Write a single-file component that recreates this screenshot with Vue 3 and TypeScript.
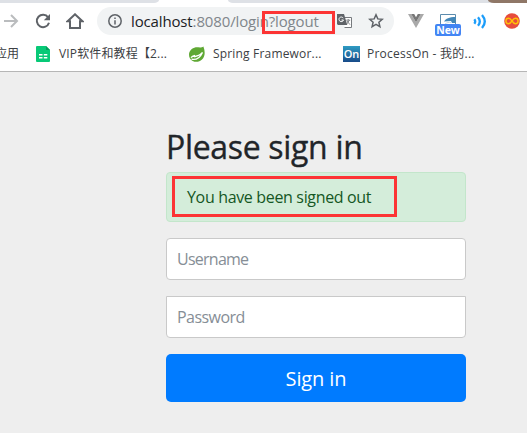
<script setup lang="ts">
import { ref } from 'vue'

const username = ref<string>('')
const password = ref<string>('')
</script>

<template>
  <div class="window">
    <div class="tabs">
      <div class="tab-left"></div>
      <div class="tab-right"><div class="avatar"></div></div>
    </div>
    <div class="toolbar">
      <svg class="nav forward" viewBox="0 0 16 16"><path d="M1 8h13M8 2l6 6-6 6" /></svg>
      <svg class="nav reload" viewBox="0 0 16 16"><path d="M13.1 4.3A6.2 6.2 0 1 0 14 9.7" /><path class="solid" d="M15 1v6.2H8.8z" /></svg>
      <svg class="nav home" viewBox="0 0 18 16"><path d="M1.6 8.2 9 1.3l7.4 6.9H14V15H4V8.2z" /></svg>
      <div class="omnibox">
        <svg class="info" viewBox="0 0 14 14"><circle cx="7" cy="7" r="6.2" /><path d="M7 6.2v4.3M7 3.4v1.6" /></svg>
        <div class="url"><span class="host">localhost</span><span class="path">:8080/login</span><span class="query">?logout</span></div>
        <svg class="translate" viewBox="0 0 15 14">
          <path d="M7 3.5h7.5v10H7.5" fill="#fff" stroke="#777a7e" />
          <path d="M0 0h7l3.3 11H1L0 10z" fill="#5f6368" />
          <path d="M6.3 4.2A2.3 2.3 0 1 0 6.5 6H4.5" fill="none" stroke="#fff" />
          <path d="M9.2 6.2h4M11.2 5v1.2M12.4 6.2 9.8 10M10 7l3 3.7" fill="none" stroke="#777a7e" stroke-width=".9" />
        </svg>
        <svg class="star" viewBox="0 0 16 16"><path d="m8 1.8 1.8 4.1 4.4.4-3.3 2.9 1 4.4L8 11.3l-3.9 2.3 1-4.4-3.3-2.9 4.4-.4z" /></svg>
      </div>
      <svg class="vue" viewBox="0 0 16 14"><path d="M0 0h3.2L8 8.3 12.8 0H16L8 14z" fill="#a9a9a9" /><path d="M3.2 0h3L8 3.2 9.8 0h3L8 8.3z" fill="#777" /></svg>
      <div class="clip">
        <svg viewBox="0 0 17 12"><path d="M.5 12V.5h15V12" fill="#fff" stroke="#5b8bad" /><path d="M4 7.500C6 4.500 9 3 15.500 3v6H12l-1-2z" fill="#4387b8" /><path d="M5 10c2-1.500 4-2 6-1.500" fill="none" stroke="#c6d9e5" /></svg>
        <span class="badge">New</span>
      </div>
      <svg class="waves" viewBox="0 0 14 15"><path d="M1.3 5.200q1.800 2.300 0 4.600M5 3.200q3.600 4.300 0 8.600M9 1q5.600 6.500 0 13" /></svg>
      <svg class="infinity" viewBox="0 0 16 16"><circle cx="8" cy="8" r="7.8" fill="#e74c3c" /><path d="M8 8C6.2 5.4 5.4 5.3 4.6 5.3a2.7 2.7 0 0 0 0 5.4C5.4 10.7 6.2 10.6 8 8s2.6-2.7 3.4-2.7a2.7 2.7 0 0 1 0 5.4C10.6 10.7 9.8 10.6 8 8z" fill="none" stroke="#ffc107" stroke-width="1.4" /></svg>
    </div>
    <div class="bookmarks">
      <span class="apps">应用</span>
      <svg class="sheet" viewBox="0 0 14 16"><path d="M1 0h9l4 4v11a1 1 0 0 1-1 1H1a1 1 0 0 1-1-1V1a1 1 0 0 1 1-1z" fill="#07c977" /><path d="M10 0v4h4z" fill="#069d5d" /><path d="M3 8.700h3.500M7.800 8.700h3.500M3 11.700h3.500M7.800 11.700h3.500" stroke="#fff" stroke-width="1.500" /></svg>
      <span class="mark vip">VIP软件和教程【2...</span>
      <svg class="leaf" viewBox="0 0 16 16"><path d="M14.400.5C16.500 6 16 11 13 13.500 9.500 17 3.500 16.500 1 12.500-1.500 8 1 2.500 6 1.500c3-.6 6 1 8.400-1z" fill="#5fa834" /><path d="M2.500 13.200c5 .8 9-2.200 11-6.800-2.300 3-5 3.600-8.300 4.400M2 11.700c1-1.300 2-1.700 4-2.200" fill="none" stroke="#fff" stroke-width="1.300" /></svg>
      <span class="mark spring">Spring Framewor...</span>
      <span class="on">On</span>
      <span class="mark process">ProcessOn - 我的...</span>
    </div>
    <main class="page">
      <form class="signin" @submit.prevent>
        <h2>Please sign in</h2>
        <div class="alert"><span>You have been signed out</span></div>
        <input v-model="username" class="user" type="text" placeholder="Username" />
        <input v-model="password" class="pass" type="password" placeholder="Password" />
        <button type="submit">Sign in</button>
      </form>
    </main>
    <div class="marker marker-url"></div>
    <div class="marker marker-alert"></div>
  </div>
</template>

<style>
body { margin: 0; background: #eee; }
</style>
<style scoped>
* { box-sizing: border-box; }
.window { position: relative; width: 527px; height: 433px; overflow: hidden; display: flex; flex-direction: column; background: #fff; font-family: "Open Sans", "Noto Sans CJK SC", sans-serif; }
svg { display: block; flex: none; }
.tabs { height: 3px; display: flex; justify-content: space-between; flex: none; }
.tab-left { width: 159px; background: #dee1e6; border-bottom-right-radius: 5px 3px; }
.tab-right { width: 299px; display: flex; justify-content: flex-end; background: #dee1e6; border-bottom-left-radius: 5px 3px; }
.avatar { width: 39px; background: #8f7767; border-bottom-left-radius: 6px 3px; }
.toolbar { height: 36px; flex: none; display: flex; align-items: center; }
.nav { fill: none; stroke: #5f6368; stroke-width: 2; height: 16px; }
.solid { fill: #5f6368; stroke: none; }
.forward { width: 16px; margin-left: 3px; stroke: #babcbe; }
.reload { width: 16px; margin-left: 16px; }
.home { width: 18px; margin-left: 15px; }
.omnibox { width: 297px; height: 28px; margin-left: 13px; margin-right: 14px; padding-left: 11px; border-radius: 14px; background: #f1f3f4; display: flex; align-items: center; flex: none; }
.info { width: 14px; height: 14px; fill: none; stroke: #5f6368; stroke-width: 1.5; }
.url { width: 206px; margin-left: 9px; padding-bottom: 1px; font-size: 15px; letter-spacing: -.14px; line-height: 20px; white-space: nowrap; color: #80868b; }
.host { color: #202124; }
.translate { width: 15px; height: 14px; }
.star { width: 16px; height: 16px; margin-left: 16px; fill: none; stroke: #5f6368; stroke-width: 1.5; }
.vue { width: 16px; height: 14px; }
.clip { width: 26px; height: 22px; margin-left: 11px; margin-top: 7px; display: flex; flex-direction: column; align-items: center; }
.clip svg { width: 17px; height: 12px; margin-bottom: -2px; }
.badge { width: 26px; height: 12px; flex: none; border-radius: 2px; background: #4285f4; color: #fff; text-align: center; font-size: 10.5px; line-height: 12px; font-weight: 700; letter-spacing: -.1px; z-index: 1; }
.waves { width: 14px; height: 15px; margin-left: 12px; fill: none; stroke: #1c9dfa; stroke-width: 2.3; }
.infinity { width: 16px; height: 16px; margin-left: 17px; }
.bookmarks { height: 33px; flex: none; display: flex; align-items: center; padding-bottom: 3px; border-bottom: 1px solid #b6b6b6; color: #3c4043; font-size: 12px; line-height: 18px; white-space: nowrap; }
.apps { width: 24px; margin-left: -5px; }
.sheet { width: 14px; height: 16px; margin-left: 17px; }
.mark { flex: none; padding-top: 1px; }
.vip { width: 130px; margin-left: 9px; letter-spacing: .15px; }
.leaf { width: 16px; height: 16px; }
.spring { width: 129px; margin-left: 8px; letter-spacing: .18px; }
.on { width: 17px; height: 16px; margin-left: 1px; background: linear-gradient(#2e9bc2, #184b89); color: #fff; font-size: 11px; line-height: 16px; text-align: center; font-weight: 600; }
.process { margin-left: 7px; letter-spacing: .25px; }
.page { flex: 1; background: #eee; padding: 56px 61px 0 166px; }
.signin { width: 300px; display: flex; flex-direction: column; }
h2 { margin: 0 0 6px; font-size: 32px; letter-spacing: -.32px; line-height: 38px; font-weight: 500; -webkit-text-stroke: .35px #212529; color: #212529; white-space: nowrap; }
.alert { height: 50px; margin-bottom: 16px; padding: 12px 20px; border: 1px solid #c3e6cb; border-radius: 4px; background: #d4edda; color: #155724; font-size: 16px; letter-spacing: -.34px; line-height: 25px; }
input { height: 42px; margin: 0 0 16px; padding: 0 10px; border: 1px solid #c9c9c9; border-radius: 4px; background: #fff; color: #495057; font-family: inherit; font-size: 16px; letter-spacing: -.75px; outline: none; }
input::placeholder { color: #868e96; opacity: 1; }
.pass { border-radius: 0 0 4px 4px; letter-spacing: -.55px; }
button { height: 48px; padding: 0; border: 0; border-radius: 5px; background: #007bff; color: #fff; font-family: inherit; font-size: 20px; letter-spacing: -.1px; }
.marker { position: absolute; border: 3px solid #fc3434; }
.marker-url { left: 262px; top: 11px; width: 73px; height: 23px; }
.marker-alert { left: 172px; top: 176px; width: 225px; height: 41px; }
</style>
